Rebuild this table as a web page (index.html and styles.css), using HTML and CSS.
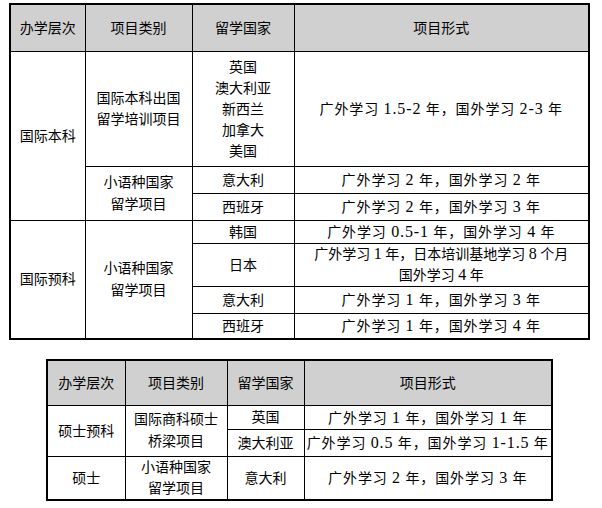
FILE: index.html
```html
<!DOCTYPE html>
<html lang="zh-CN">
<head>
<meta charset="utf-8">
<title>办学层次与项目形式</title>
<link rel="stylesheet" href="styles.css">
</head>
<body>
<div class="page">
  <table class="grid t1">
    <colgroup><col class="a1"><col class="a2"><col class="a3"><col class="a4"></colgroup>
    <thead>
      <tr class="head"><th>办学层次</th><th>项目类别</th><th>留学国家</th><th>项目形式</th></tr>
    </thead>
    <tbody>
      <tr class="r-a">
        <td rowspan="3">国际本科</td>
        <td>国际本科出国<br>留学培训项目</td>
        <td>英国<br>澳大利亚<br>新西兰<br>加拿大<br>美国</td>
        <td class="form">广外学习 <span class="n">1.5-2</span> 年，国外学习 <span class="n">2-3</span> 年</td>
      </tr>
      <tr class="r-b">
        <td rowspan="2" class="two">小语种国家<br>留学项目</td>
        <td>意大利</td>
        <td class="form">广外学习 <span class="n">2</span> 年，国外学习 <span class="n">2</span> 年</td>
      </tr>
      <tr class="r-c">
        <td>西班牙</td>
        <td class="form">广外学习 <span class="n">2</span> 年，国外学习 <span class="n">3</span> 年</td>
      </tr>
      <tr class="r-d">
        <td rowspan="4">国际预科</td>
        <td rowspan="4" class="two">小语种国家<br>留学项目</td>
        <td>韩国</td>
        <td class="form">广外学习 <span class="n">0.5-1</span> 年，国外学习 <span class="n">4</span> 年</td>
      </tr>
      <tr class="r-e">
        <td>日本</td>
        <td class="form tight">广外学习 <span class="n">1</span> 年，日本培训基地学习 <span class="n">8</span> 个月<br>国外学习 <span class="n">4</span> 年</td>
      </tr>
      <tr class="r-f">
        <td>意大利</td>
        <td class="form">广外学习 <span class="n">1</span> 年，国外学习 <span class="n">3</span> 年</td>
      </tr>
      <tr class="r-g">
        <td>西班牙</td>
        <td class="form">广外学习 <span class="n">1</span> 年，国外学习 <span class="n">4</span> 年</td>
      </tr>
    </tbody>
  </table>

  <table class="grid t2">
    <colgroup><col class="b1"><col class="b2"><col class="b3"><col class="b4"></colgroup>
    <thead>
      <tr class="head2"><th>办学层次</th><th>项目类别</th><th>留学国家</th><th>项目形式</th></tr>
    </thead>
    <tbody>
      <tr class="s-a">
        <td rowspan="2">硕士预科</td>
        <td rowspan="2" class="two">国际商科硕士<br>桥梁项目</td>
        <td>英国</td>
        <td class="form">广外学习 <span class="n">1</span> 年，国外学习 <span class="n">1</span> 年</td>
      </tr>
      <tr class="s-b">
        <td>澳大利亚</td>
        <td class="form">广外学习 <span class="n">0.5</span> 年，国外学习 <span class="n">1-1.5</span> 年</td>
      </tr>
      <tr class="s-c">
        <td>硕士</td>
        <td>小语种国家<br>留学项目</td>
        <td>意大利</td>
        <td class="form">广外学习 <span class="n">2</span> 年，国外学习 <span class="n">3</span> 年</td>
      </tr>
    </tbody>
  </table>
</div>
</body>
</html>
```

FILE: styles.css
```css
html, body {
  margin: 0;
  padding: 0;
  background: #ffffff;
}

body {
  font-family: "Liberation Serif", "Noto Sans CJK SC", serif;
  font-size: 14px;
  color: #000000;
}

.page {
  padding: 3px 0 0 9px;
}

.grid {
  border-collapse: collapse;
  table-layout: fixed;
  border: 2px solid #000;
}

.grid th,
.grid td {
  border: 1px solid #000;
  padding: 0;
  text-align: center;
  vertical-align: middle;
  line-height: 21px;
  font-weight: normal;
}

.grid th {
  background: #d0d0d0;
}

.grid td.two {
  line-height: 22px;
}

.grid td.form {
  letter-spacing: 0.9px;
}

.grid td.tight {
  letter-spacing: 0;
  line-height: 20px;
}

.n {
  font-size: 16px;
}

/* table 1 */
.t1 { width: 579px; }
.a1 { width: 75px; }
.a2 { width: 107px; }
.a3 { width: 102px; }
.a4 { width: 295px; }

.head th { height: 46px; }
.r-a td { height: 114px; }
.r-b td { height: 26px; }
.r-c td { height: 26px; }
.r-d td { height: 21px; }
.r-e td { height: 41px; }
.r-f td { height: 26px; }
.r-g td { height: 24px; }

/* table 2 */
.t2 {
  width: 505px;
  margin: 19px 0 0 37px;
}
.b1 { width: 78px; }
.b2 { width: 102px; }
.b3 { width: 77px; }
.b4 { width: 248px; }

.head2 th { height: 44px; }
.s-a td { height: 23px; }
.s-b td { height: 26px; }
.s-c td { height: 42px; }
.s-c td { line-height: 21px; }
```
